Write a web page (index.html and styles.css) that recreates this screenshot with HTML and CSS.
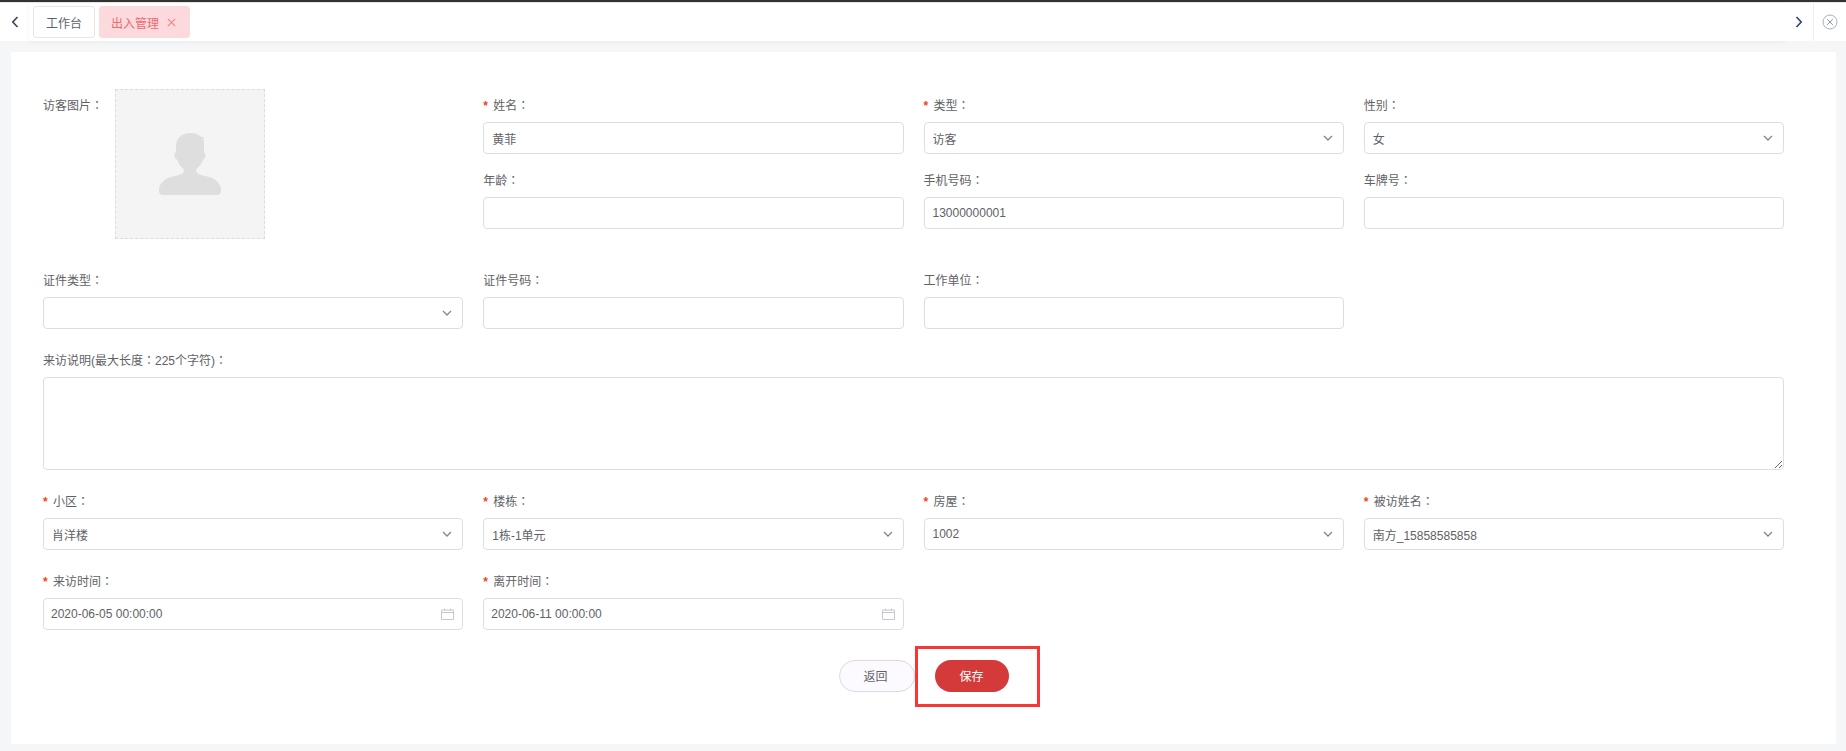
FILE: index.html
```html
<!DOCTYPE html>
<html lang="zh-CN">
<head>
<meta charset="utf-8">
<title>出入管理</title>
<link rel="stylesheet" href="styles.css">
</head>
<body>
<svg class="sprite" width="0" height="0" aria-hidden="true">
  <symbol id="chev" viewBox="0 0 10 6"><path d="M1 1l4 4 4-4" fill="none" stroke="#7f8794" stroke-width="1.3"/></symbol>
  <symbol id="cal" viewBox="0 0 13 12"><path d="M.5 2h12v9.5H.5zM.5 4.5h12M3.500 .5v2.500M9.500 .5v2.500" fill="none" stroke="#c3c8d2" stroke-width="1"/></symbol>
</svg>
<div class="topline"></div>
<header class="tabbar">
  <button class="nav nav-left" type="button"><svg width="8" height="12" viewBox="0 0 8 12"><path d="M6.500 1L1.800 6l4.700 5" fill="none" stroke="#3c4a5e" stroke-width="1.700"/></svg></button>
  <nav class="tabs">
    <span class="tab">工作台</span>
    <span class="tab tab-active">出入管理<svg class="tab-x" width="9" height="9" viewBox="0 0 9 9"><path d="M.8.8l7.400 7.400M8.200.8L.8 8.200" stroke="#f0858c" stroke-width="1.200"/></svg></span>
  </nav>
  <button class="nav nav-right" type="button"><svg width="8" height="12" viewBox="0 0 8 12"><path d="M1.500 1l4.700 5-4.700 5" fill="none" stroke="#2f4a70" stroke-width="1.700"/></svg></button>
  <button class="nav nav-close" type="button"><svg width="16" height="16" viewBox="0 0 16 16"><circle cx="8" cy="8" r="7" fill="none" stroke="#a9b0bb"/><path d="M5.200 5.200l5.600 5.600M10.800 5.200l-5.600 5.600" stroke="#8e95a1"/></svg></button>
</header>
<main class="page">
  <form class="card">
    <section class="grid grid-top">
      <div class="photo-field">
        <span class="photo-label">访客图片<span class="colon" lang="zh-TW">：</span></span>
        <div class="photo">
          <svg width="62" height="62" viewBox="0 0 62 62"><path fill="#dedede" d="M31 0C35.500 0 39 1.300 41 3C42 4 43.500 4.300 45 4.300C44 5.300 44.500 7 45 9L45 19C46 19.300 46.500 20.500 46.500 22C46.500 24.500 45.500 26 44 26.500C42.800 30 41 33 38 35.500L37 38C37.500 40 40 41.500 44 42.500C50 43.800 54 45 57 47.500C60 50 62 53 62 56.500L62 58C62 60.500 60.500 62 58 62L4 62C1.500 62 0 60.500 0 58L0 56.500C0 53 2 50 5 47.500C8 45 12 43.800 18 42.500C22 41.500 24.500 40 25 38L24 35.500C21 33 19.200 30 18 26.500C16.500 26 15.500 24.500 15.500 22C15.500 20.500 16 19.300 17 19L17 13C17 5 23 0 31 0Z"/></svg>
        </div>
      </div>
      <div class="field"><label class="label"><i class="req">*</i>姓名<span class="colon" lang="zh-TW">：</span></label><input class="control" value="黄菲"></div>
      <div class="field"><label class="label"><i class="req">*</i>类型<span class="colon" lang="zh-TW">：</span></label><div class="wrap"><input class="control" value="访客" readonly><svg class="chev"><use href="#chev"/></svg></div></div>
      <div class="field"><label class="label">性别<span class="colon" lang="zh-TW">：</span></label><div class="wrap"><input class="control" value="女" readonly><svg class="chev"><use href="#chev"/></svg></div></div>
      <div class="field"><label class="label">年龄<span class="colon" lang="zh-TW">：</span></label><input class="control"></div>
      <div class="field"><label class="label">手机号码<span class="colon" lang="zh-TW">：</span></label><input class="control" value="13000000001"></div>
      <div class="field"><label class="label">车牌号<span class="colon" lang="zh-TW">：</span></label><input class="control"></div>
    </section>
    <section class="grid">
      <div class="field"><label class="label">证件类型<span class="colon" lang="zh-TW">：</span></label><div class="wrap"><input class="control" readonly><svg class="chev"><use href="#chev"/></svg></div></div>
      <div class="field"><label class="label">证件号码<span class="colon" lang="zh-TW">：</span></label><input class="control"></div>
      <div class="field"><label class="label">工作单位<span class="colon" lang="zh-TW">：</span></label><input class="control"></div>
    </section>
    <section class="field">
      <label class="label">来访说明(最大长度<span class="colon" lang="zh-TW">：</span>225个字符)<span class="colon" lang="zh-TW">：</span></label>
      <textarea class="control area"></textarea>
    </section>
    <section class="grid">
      <div class="field"><label class="label"><i class="req">*</i>小区<span class="colon" lang="zh-TW">：</span></label><div class="wrap"><input class="control" value="肖洋楼" readonly><svg class="chev"><use href="#chev"/></svg></div></div>
      <div class="field"><label class="label"><i class="req">*</i>楼栋<span class="colon" lang="zh-TW">：</span></label><div class="wrap"><input class="control" value="1栋-1单元" readonly><svg class="chev"><use href="#chev"/></svg></div></div>
      <div class="field"><label class="label"><i class="req">*</i>房屋<span class="colon" lang="zh-TW">：</span></label><div class="wrap"><input class="control" value="1002" readonly><svg class="chev"><use href="#chev"/></svg></div></div>
      <div class="field"><label class="label"><i class="req">*</i>被访姓名<span class="colon" lang="zh-TW">：</span></label><div class="wrap"><input class="control" value="南方_15858585858" readonly><svg class="chev"><use href="#chev"/></svg></div></div>
    </section>
    <section class="grid">
      <div class="field"><label class="label"><i class="req">*</i>来访时间<span class="colon" lang="zh-TW">：</span></label><div class="wrap"><input class="control control-date" value="2020-06-05 00:00:00"><svg class="cal"><use href="#cal"/></svg></div></div>
      <div class="field"><label class="label"><i class="req">*</i>离开时间<span class="colon" lang="zh-TW">：</span></label><div class="wrap"><input class="control control-date" value="2020-06-11 00:00:00"><svg class="cal"><use href="#cal"/></svg></div></div>
    </section>
    <div class="actions">
      <button class="btn btn-back" type="button">返回</button>
      <div class="save-wrap">
        <button class="btn btn-save" type="button">保存</button>
        <span class="annotation"></span>
      </div>
    </div>
  </form>
</main>
</body>
</html>
```
FILE: styles.css
```css
* { box-sizing: border-box; }
html, body { margin: 0; height: 100%; }
body {
  width: 1846px;
  height: 751px;
  overflow: hidden;
  display: flex;
  flex-direction: column;
  background: #f5f6f8;
  color: #606266;
  font: 12px "Liberation Sans", "Noto Sans CJK SC", sans-serif;
}
.sprite { position: absolute; }
.topline { height: 3px; flex: none; background: linear-gradient(#333 2px, #e8e8e8 2px); }
.tabbar {
  height: 38px;
  flex: none;
  display: flex;
  align-items: stretch;
  background: #fff;
}
.nav {
  padding: 0;
  border: 0;
  background: #fff;
  display: flex;
  align-items: center;
  justify-content: center;
}
.nav-left { width: 29px; }
.nav-right { width: 28px; }
.nav-close { width: 33px; border-left: 1px solid #eceef1; }
.tabs {
  flex: 1;
  display: flex;
  align-items: center;
  gap: 4px;
  padding: 0 4px;
  box-shadow: 0 1px 5px rgba(0, 0, 0, .05);
}
.tab {
  height: 32px;
  width: 62px;
  display: flex;
  align-items: center;
  justify-content: center;
  border: 1px solid #e6e6e6;
  border-radius: 3px;
  background: #fff;
  color: #5a6270;
}
.tab-active {
  width: 91px;
  gap: 8px;
  padding-right: 2px;
  border-color: #fbd9dc;
  background: #fbd9dc;
  color: #ee6a72;
}
.page { flex: 1; padding: 11px 10px 7px 11px; }
.card {
  height: 692px;
  background: #fff;
  padding: 37px 52px 0 32px;
  display: flex;
  flex-direction: column;
  gap: 15px;
}
.grid {
  display: grid;
  grid-template-columns: repeat(4, 1fr);
  column-gap: 20px;
  row-gap: 10px;
}
.grid-top { grid-auto-rows: 65px; margin-bottom: 20px; }
.photo-field {
  grid-row: span 2;
  display: flex;
  align-items: flex-start;
  gap: 13px;
  height: 140px;
}
.photo-label { line-height: 31px; white-space: nowrap; width: 59px; }
.colon { font-family: "Noto Sans CJK TC", sans-serif; }
.photo {
  flex: none;
  width: 150px;
  height: 150px;
  border: 1px dashed #dcdcdc;
  background: #f4f4f4;
  display: flex;
  align-items: center;
  justify-content: center;
}
.field { display: flex; flex-direction: column; }
.label { height: 33px; line-height: 31px; white-space: nowrap; }
.req {
  display: inline-block;
  width: 10px;
  color: #f2431d;
  font-style: normal;
  font-weight: 700;
}
.wrap { position: relative; }
.control {
  display: block;
  width: 100%;
  height: 32px;
  padding: 0 8px;
  border: 1px solid #dcdee2;
  border-radius: 4px;
  outline: 0;
  background: #fff;
  color: #606266;
  font: inherit;
  line-height: 20px;
}
.control-date { padding-left: 7px; }
.area { height: 93px; padding: 6px 8px; }
.chev {
  position: absolute;
  right: 11px;
  top: 13px;
  width: 10px;
  height: 6px;
}
.cal {
  position: absolute;
  right: 9px;
  top: 10px;
  width: 13px;
  height: 12px;
}
.actions {
  margin-top: 15px;
  padding-left: 21px;
  display: flex;
  justify-content: center;
  gap: 20px;
}
.btn {
  height: 32px;
  padding: 0 1px 2px 0;
  border-radius: 16px;
  font: inherit;
}
.btn-back { width: 76px; padding-right: 3px; border: 1px solid #dcd9e3; background: #fcfaff; color: #606266; }
.btn-save { display: block; width: 74px; border: 0; background: #d53a3a; color: #fff; }
.save-wrap { position: relative; }
.annotation {
  position: absolute;
  left: -20px;
  top: -14px;
  width: 125px;
  height: 61px;
  border: 3px solid #f83636;
  pointer-events: none;
}
```
